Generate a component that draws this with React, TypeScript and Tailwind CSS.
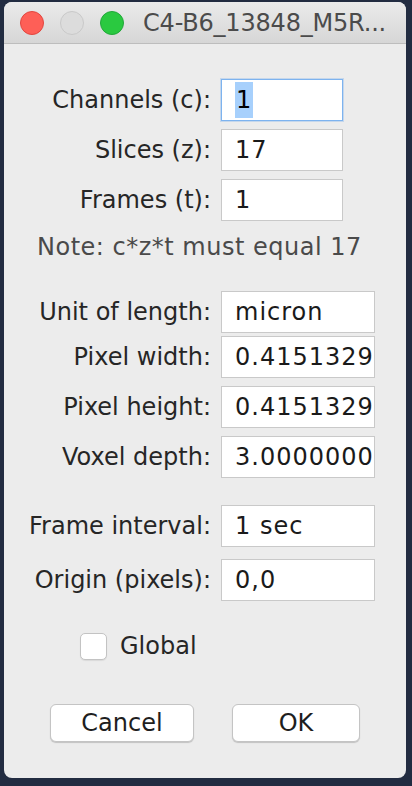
import React from "react";

const font = { fontFamily: '"DejaVu Sans", "Lucida Grande", sans-serif' };

function Field({
  label,
  value,
  wide = false,
  focused = false,
  className = "",
}: {
  label: string;
  value: string;
  wide?: boolean;
  focused?: boolean;
  className?: string;
}) {
  return (
    <div className={`flex items-center ${className}`}>
      <div className="w-[207px] shrink-0 whitespace-nowrap text-right text-[24px] text-[#262626]">{label}</div>
      <div
        className={`ml-[10px] flex h-[42px] items-center overflow-hidden whitespace-nowrap bg-white pl-[13px] text-[24px] tracking-[1px] text-[#1a1a1a] ${
          wide ? "w-[154px]" : "w-[122px]"
        } ${focused ? "border border-[#7db3ef] shadow-[0_0_0_1px_rgba(125,179,239,0.35)]" : "border border-[#c9c9c9]"}`}
      >
        {focused ? <span className="bg-[#a7d0fc] px-[1px] text-black">{value}</span> : value}
      </div>
    </div>
  );
}

function Button({ children, className = "" }: { children: React.ReactNode; className?: string }) {
  return (
    <button
      className={`flex h-[38px] items-center justify-center rounded-[6px] border border-[#c4c4c4] bg-white text-[24px] text-[#1e1e1e] shadow-[0_1px_1px_rgba(0,0,0,0.18)] ${className}`}
    >
      {children}
    </button>
  );
}

export default function App() {
  return (
    <div className="h-[786px] w-[412px] overflow-hidden bg-[#222c41] pl-[4px] pt-[2px]" style={font}>
      <div className="flex h-[776px] w-[402px] flex-col overflow-hidden rounded-[8px] bg-[#ececec]">
        {/* Title bar */}
        <div className="flex h-[42px] shrink-0 items-center border-b border-[#bdbdbd] bg-gradient-to-b from-[#ebebeb] to-[#d6d6d6] pl-[16px]">
          <div className="flex items-center gap-[16px]">
            <div className="h-[24px] w-[24px] rounded-full border border-[#e2463f] bg-[#fe5f57]" />
            <div className="h-[24px] w-[24px] rounded-full border border-[#c9c9c9] bg-[#dcdcdc]" />
            <div className="h-[24px] w-[24px] rounded-full border border-[#22a83a] bg-[#2ac940]" />
          </div>
          <div className="ml-[19px] whitespace-nowrap text-[24px] tracking-[-0.2px] text-[#4b4b4b]">C4-B6_13848_M5R...</div>
        </div>

        {/* Dimensions */}
        <div className="flex flex-col gap-[8px] pt-[35px]">
          <Field label="Channels (c):" value="1" focused />
          <Field label="Slices (z):" value="17" />
          <Field label="Frames (t):" value="1" />
        </div>
        <div className="mt-[8px] whitespace-nowrap pl-[33px] text-[24px] tracking-[0.5px] text-[#4a4a4a]">
          Note: c*z*t must equal 17
        </div>

        {/* Calibration */}
        <div className="mt-[26px] flex flex-col gap-[2px]">
          <Field label="Unit of length:" value="micron" wide />
          <Field label="Pixel width:" value="0.4151329" wide className="mt-[1px]" />
          <Field label="Pixel height:" value="0.4151329" wide className="mt-[6px]" />
          <Field label="Voxel depth:" value="3.0000000" wide className="mt-[6px]" />
        </div>

        <div className="mt-[27px] flex flex-col gap-[12px]">
          <Field label="Frame interval:" value="1 sec" wide />
          <Field label="Origin (pixels):" value="0,0" wide />
        </div>

        {/* Global checkbox */}
        <div className="mt-[27px] flex items-center pl-[76px]">
          <div className="h-[27px] w-[27px] rounded-[5px] border border-[#c3c3c3] bg-white shadow-[0_1px_1px_rgba(0,0,0,0.08)]" />
          <span className="ml-[13px] text-[24px] text-[#262626]">Global</span>
        </div>

        {/* Buttons */}
        <div className="mt-[40px] flex pl-[46px]">
          <Button className="w-[144px]">Cancel</Button>
          <Button className="ml-[38px] w-[128px]">OK</Button>
        </div>
      </div>
    </div>
  );
}
